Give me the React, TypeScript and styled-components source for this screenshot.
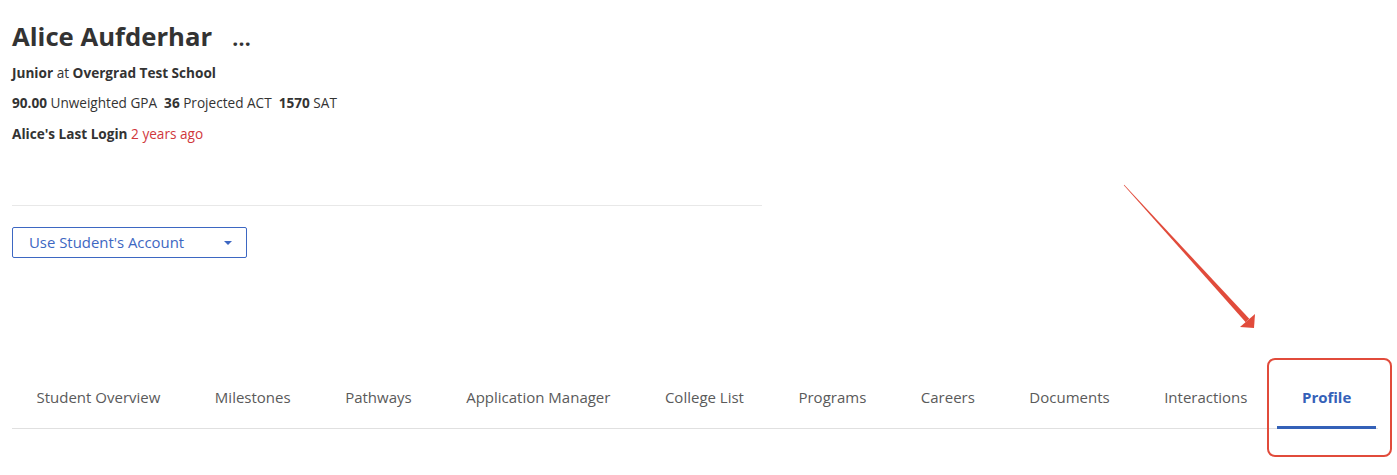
import { createGlobalStyle } from "styled-components";
import styled from "styled-components";

const GlobalStyle = createGlobalStyle`
  body {
    margin: 0;
    background: #fff;
    font-family: "Open Sans", "Liberation Sans", sans-serif;
    color: #333;
  }
`

const Page = styled.div`
  position: relative;
  min-height: 475px;
  box-sizing: border-box;
  padding: 21px 19px 0 12px;
`

const Header = styled.div`
  width: 750px;
`

const NameRow = styled.div`
  display: flex;
  align-items: baseline;
  gap: 20px;
  height: 32px;
`

const Name = styled.h1`
  margin: 0;
  font-size: 25.7px;
  line-height: 32px;
  font-weight: 700;
  color: #333;
`

const More = styled.span`
  font-size: 21px;
  font-weight: 700;
  letter-spacing: 0.3px;
  color: #333;
`

const Info = styled.div`
  font-size: 13.6px;
  line-height: 16px;
  margin-top: ${p => p.$top ?? 14}px;
  color: #333;
  b { font-weight: 700; }
`

const Late = styled.span`
  color: #d0373c;
`

const Divider = styled.hr`
  margin: 63px 0 0;
  border: 0;
  border-top: 1px solid #e8e8e8;
`

const AccountButton = styled.button`
  margin-top: 21px;
  width: 235px;
  height: 31px;
  display: flex;
  align-items: center;
  justify-content: space-between;
  padding: 0 14px 2px 16px;
  background: #fff;
  border: 1px solid #3d67c2;
  border-radius: 2px;
  color: #3d67c2;
  font-family: inherit;
  font-size: 14.9px;
`

const Caret = styled.span`
  margin-top: 2px;
  width: 0;
  height: 0;
  border-left: 4px solid transparent;
  border-right: 4px solid transparent;
  border-top: 4px solid #3d67c2;
`

const Tabs = styled.nav`
  margin-top: 108px;
  display: flex;
  gap: 5px;
  border-bottom: 1px solid #e0e0e0;
`

const Tab = styled.div`
  position: relative;
  padding: 0 25px 2px 24.5px;
  height: 63px;
  box-sizing: border-box;
  display: flex;
  align-items: center;
  font-size: 15px;
  color: ${p => (p.$active ? "#3461b8" : "#5a5a5a")};
  font-weight: ${p => (p.$active ? 700 : 400)};
  box-shadow: ${p => (p.$active ? "inset 0 -3px 0 #3461b8" : "none")};
  margin-bottom: -1px;
`

const Highlight = styled.div`
  position: absolute;
  left: -10px;
  right: -16px;
  top: -8px;
  bottom: -28px;
  border: 2px solid #e14b3b;
  border-radius: 8px;
`

const Arrow = styled.svg`
  position: absolute;
  left: 1118px;
  top: 180px;
`

const tabs = [
  "Student Overview",
  "Milestones",
  "Pathways",
  "Application Manager",
  "College List",
  "Programs",
  "Careers",
  "Documents",
  "Interactions",
  "Profile",
]

export default function App() {
  return (
    <>
      <GlobalStyle />
      <Page>
        <Header>
          <NameRow>
            <Name>Alice Aufderhar</Name>
            <More>...</More>
          </NameRow>
          <Info $top={12}>
            <b>Junior</b> at <b>Overgrad Test School</b>
          </Info>
          <Info>
            <b>90.00</b> Unweighted GPA&nbsp;&nbsp;<b>36</b> Projected ACT&nbsp;&nbsp;<b>1570</b> SAT
          </Info>
          <Info $top={15}>
            <b>Alice's Last Login</b> <Late>2 years ago</Late>
          </Info>
          <Divider />
        </Header>
        <AccountButton>
          Use Student's Account
          <Caret />
        </AccountButton>
        <Tabs>
          {tabs.map(t => (
            <Tab key={t} $active={t === "Profile"}>
              {t}
              {t === "Profile" && <Highlight />}
            </Tab>
          ))}
        </Tabs>
        <Arrow width="150" height="160" viewBox="0 0 150 160">
          <polygon points="5.8,5.2 6.2,4.8 131.3,138.8 127.7,142.2" fill="#e14b3b" />
          <polygon points="122,147 137,134 136,148" fill="#e14b3b" />
        </Arrow>
      </Page>
    </>
  )
}
